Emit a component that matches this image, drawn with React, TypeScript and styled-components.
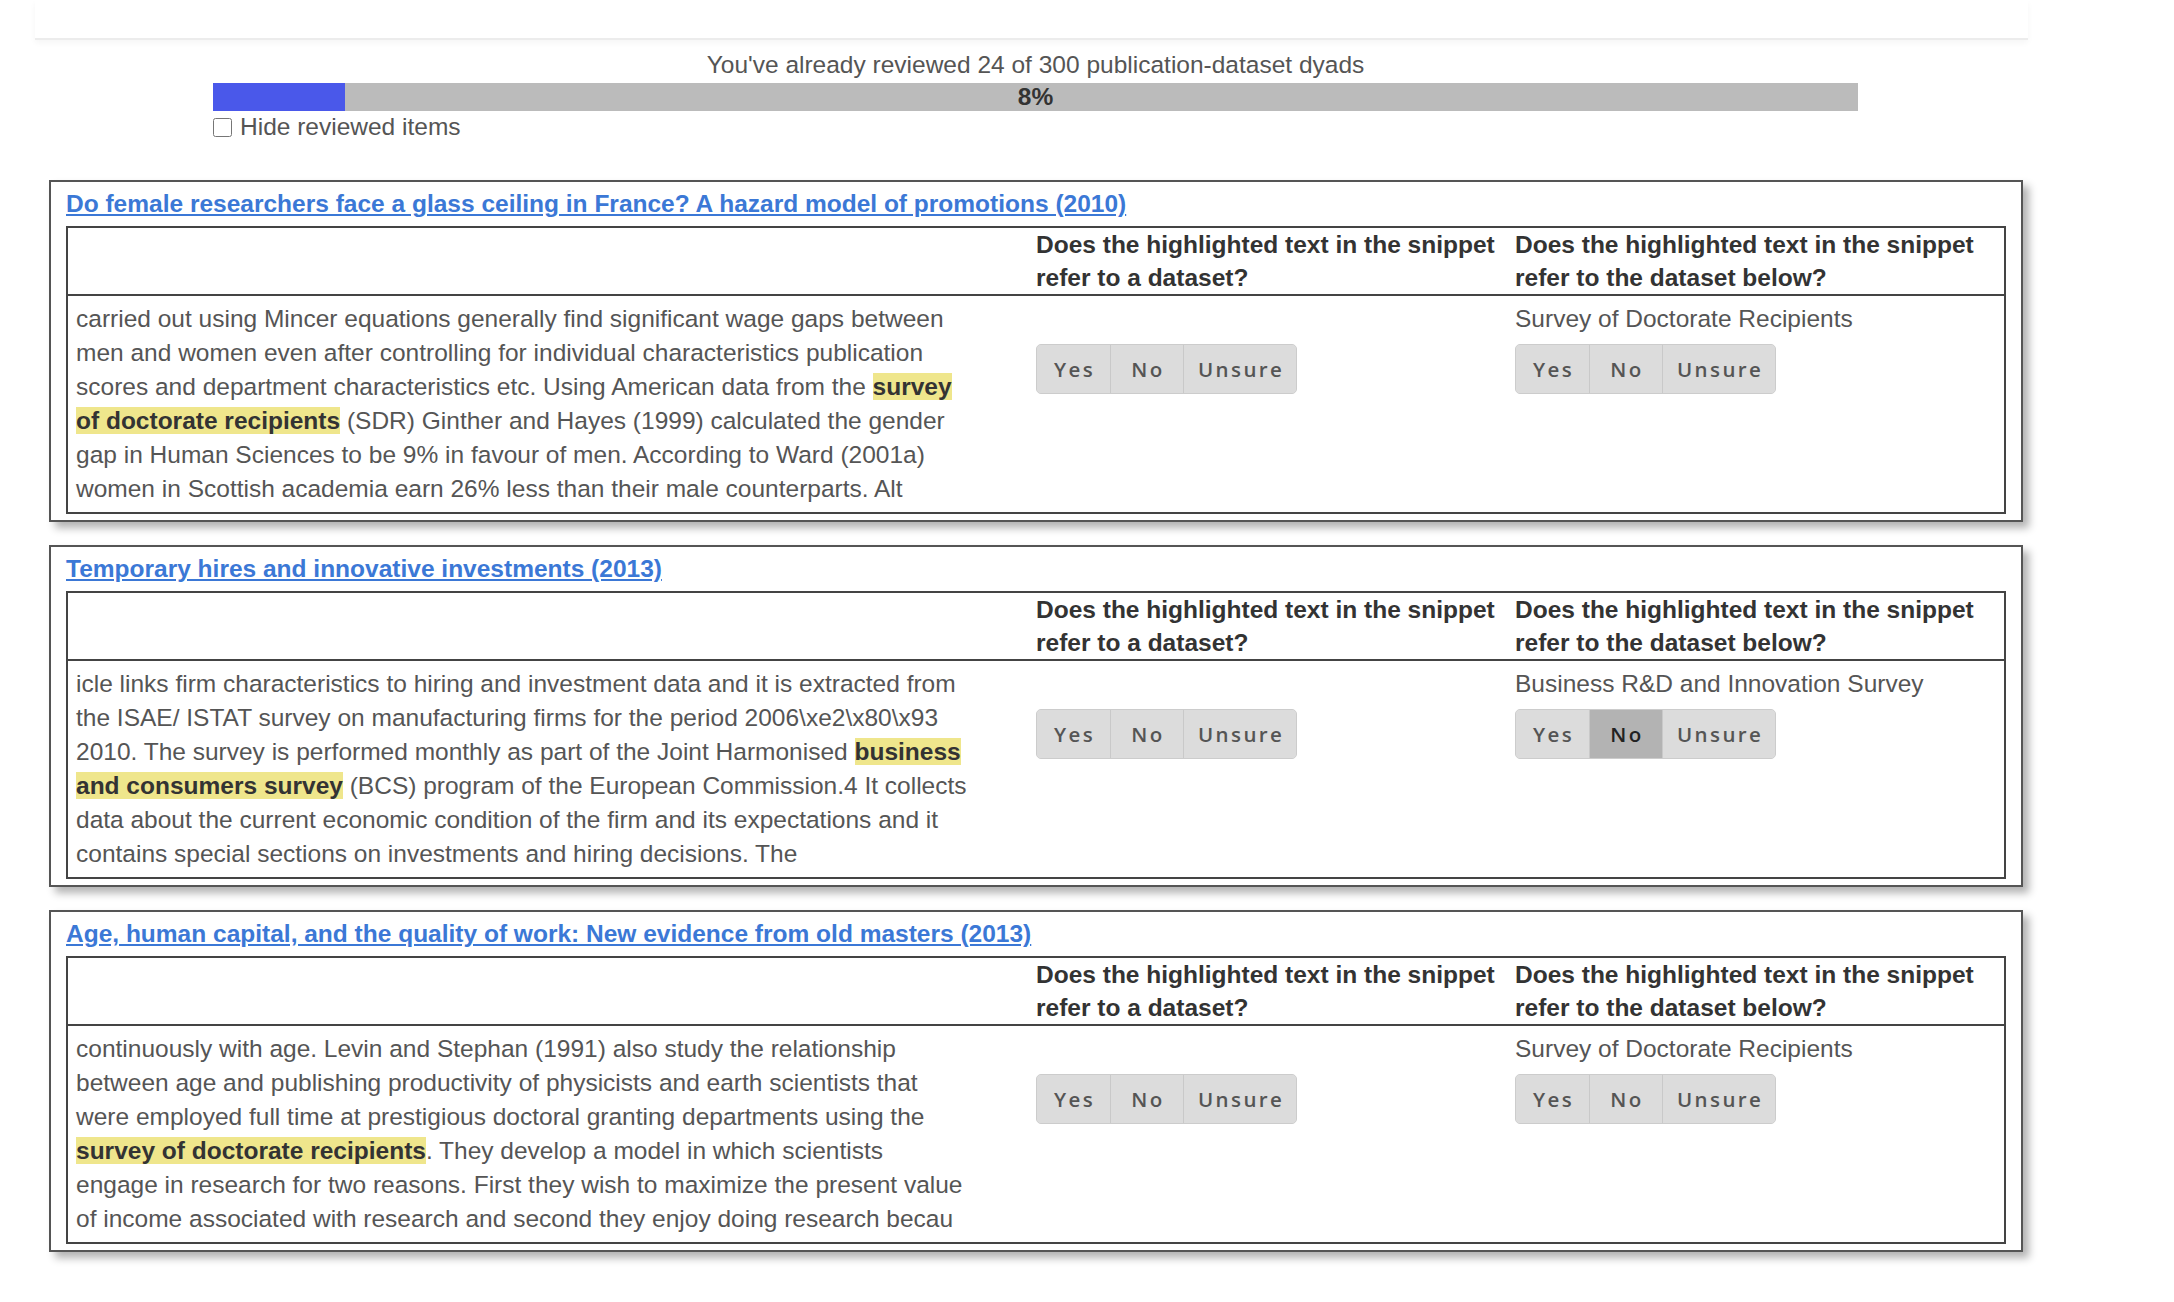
import React from "react";
import styled, { createGlobalStyle } from "styled-components";

const GlobalStyle = createGlobalStyle`
  html, body { margin: 0; padding: 0; background: #ffffff; }
  body {
    font-family: "Liberation Sans", Arial, sans-serif;
    font-size: 24.5px;
    color: #555555;
  }
  * { box-sizing: border-box; }
`;

const Page = styled.div`
  width: 2174px;
  padding-bottom: 40px;
`;

const TopBar = styled.div`
  margin-left: 35px;
  width: 1993px;
  height: 40px;
  border-bottom: 2px solid #ececec;
  box-shadow: 0 3px 6px rgba(0, 0, 0, 0.04);
`;

const ProgressSection = styled.section`
  margin-left: 213px;
  width: 1645px;
  padding-top: 8px;
`;

const ProgressLabel = styled.div`
  text-align: center;
  line-height: 34px;
  margin-bottom: 1px;
`;

const ProgressTrack = styled.div`
  position: relative;
  height: 28px;
  background: #bbbbbb;
`;

const ProgressFill = styled.div`
  height: 100%;
  background: #4a58ea;
`;

const ProgressPercent = styled.span`
  position: absolute;
  inset: 0;
  display: flex;
  align-items: center;
  justify-content: center;
  font-weight: bold;
  color: #333333;
  line-height: 28px;
`;

const HideRow = styled.label`
  display: flex;
  align-items: center;
  gap: 8px;
  height: 32px;
  line-height: 32px;
`;

const HideBox = styled.input`
  width: 19px;
  height: 19px;
  margin: 0;
`;

const CardList = styled.div`
  margin-top: 37px;
  padding-left: 49px;
  display: flex;
  flex-direction: column;
  gap: 23px;
`;

const Card = styled.article`
  width: 1974px;
  border: 2px solid #555555;
  padding: 5px 15px 6px 15px;
  background: #ffffff;
  box-shadow: 6px 6px 8px rgba(0, 0, 0, 0.3);
`;

const CardTitle = styled.a`
  display: inline-block;
  font-weight: bold;
  color: #3b78d6;
  text-decoration: underline;
  line-height: 34px;
  margin-bottom: 5px;
`;

const Review = styled.div`
  display: grid;
  grid-template-columns: 960px 479px 1fr;
  border: 2px solid #444444;
`;

const HeadCell = styled.div`
  padding: 0 8px;
  line-height: 33px;
  font-weight: bold;
  color: #333333;
  border-bottom: 2px solid #444444;
  min-height: 68px;
`;

const BodyCell = styled.div`
  padding: 6px 8px 6px 8px;
  line-height: 34px;
`;

const Snippet = styled.div`
  width: 893px;
`;

const Mark = styled.mark`
  background: #efe68c;
  color: #333333;
  font-weight: bold;
`;

const DatasetName = styled.div`
  min-height: 34px;
  line-height: 34px;
  margin-bottom: 8px;
`;

const SegGroup = styled.div`
  display: inline-flex;
  border: 1px solid #cccccc;
  border-radius: 5px;
  background: #dcdcdc;
  overflow: hidden;
`;

const Segment = styled.button<{ $active?: boolean }>`
  height: 48px;
  min-width: 73px;
  padding: 0 12px 0 14px;
  border: none;
  border-left: 1px solid #c9c9c9;
  background: ${(p) => (p.$active ? "#b3b3b3" : "#dcdcdc")};
  color: ${(p) => (p.$active ? "#222222" : "#555555")};
  font-family: "Open Sans", "DejaVu Sans", sans-serif;
  font-size: 20.5px;
  font-weight: 600;
  letter-spacing: 2.4px;
  display: flex;
  align-items: center;
  justify-content: center;
  cursor: pointer;
  &:first-child { border-left: none; }
`;

type Choice = "Yes" | "No" | "Unsure" | null;

const Choices: React.FC<{ value?: Choice }> = ({ value = null }) => (
  <SegGroup>
    {(["Yes", "No", "Unsure"] as const).map((c) => (
      <Segment key={c} $active={value === c}>
        {c}
      </Segment>
    ))}
  </SegGroup>
);

type Item = {
  title: string;
  dataset: string;
  before: string;
  mark: string;
  after: string;
  second: Choice;
};

const items: Item[] = [
  {
    title:
      "Do female researchers face a glass ceiling in France? A hazard model of promotions (2010)",
    dataset: "Survey of Doctorate Recipients",
    before:
      "carried out using Mincer equations generally find significant wage gaps between men and women even after controlling for individual characteristics publication scores and department characteristics etc. Using American data from the ",
    mark: "survey of doctorate recipients",
    after:
      " (SDR) Ginther and Hayes (1999) calculated the gender gap in Human Sciences to be 9% in favour of men. According to Ward (2001a) women in Scottish academia earn 26% less than their male counterparts. Alt",
    second: null,
  },
  {
    title: "Temporary hires and innovative investments (2013)",
    dataset: "Business R&D and Innovation Survey",
    before:
      "icle links firm characteristics to hiring and investment data and it is extracted from the ISAE/ ISTAT survey on manufacturing firms for the period 2006\\xe2\\x80\\x93 2010. The survey is performed monthly as part of the Joint Harmonised ",
    mark: "business and consumers survey",
    after:
      " (BCS) program of the European Commission.4 It collects data about the current economic condition of the firm and its expectations and it contains special sections on investments and hiring decisions. The",
    second: "No",
  },
  {
    title:
      "Age, human capital, and the quality of work: New evidence from old masters (2013)",
    dataset: "Survey of Doctorate Recipients",
    before:
      "continuously with age. Levin and Stephan (1991) also study the relationship between age and publishing productivity of physicists and earth scientists that were employed full time at prestigious doctoral granting departments using the ",
    mark: "survey of doctorate recipients",
    after:
      ". They develop a model in which scientists engage in research for two reasons. First they wish to maximize the present value of income associated with research and second they enjoy doing research becau",
    second: null,
  },
];

export default function App() {
  const reviewed = 24;
  const total = 300;
  const pct = Math.round((reviewed / total) * 100);
  return (
    <Page>
      <GlobalStyle />
      <TopBar />
      <ProgressSection>
        <ProgressLabel>
          You've already reviewed {reviewed} of {total} publication-dataset dyads
        </ProgressLabel>
        <ProgressTrack>
          <ProgressFill style={{ width: `${(reviewed / total) * 100}%` }} />
          <ProgressPercent>{pct}%</ProgressPercent>
        </ProgressTrack>
        <HideRow>
          <HideBox type="checkbox" />
          Hide reviewed items
        </HideRow>
      </ProgressSection>
      <CardList>
        {items.map((it) => (
          <Card key={it.title}>
            <CardTitle href="#">{it.title}</CardTitle>
            <Review>
              <HeadCell />
              <HeadCell>Does the highlighted text in the snippet refer to a dataset?</HeadCell>
              <HeadCell>Does the highlighted text in the snippet refer to the dataset below?</HeadCell>
              <BodyCell>
                <Snippet>
                  {it.before}
                  <Mark>{it.mark}</Mark>
                  {it.after}
                </Snippet>
              </BodyCell>
              <BodyCell>
                <DatasetName />
                <Choices />
              </BodyCell>
              <BodyCell>
                <DatasetName>{it.dataset}</DatasetName>
                <Choices value={it.second} />
              </BodyCell>
            </Review>
          </Card>
        ))}
      </CardList>
    </Page>
  );
}
